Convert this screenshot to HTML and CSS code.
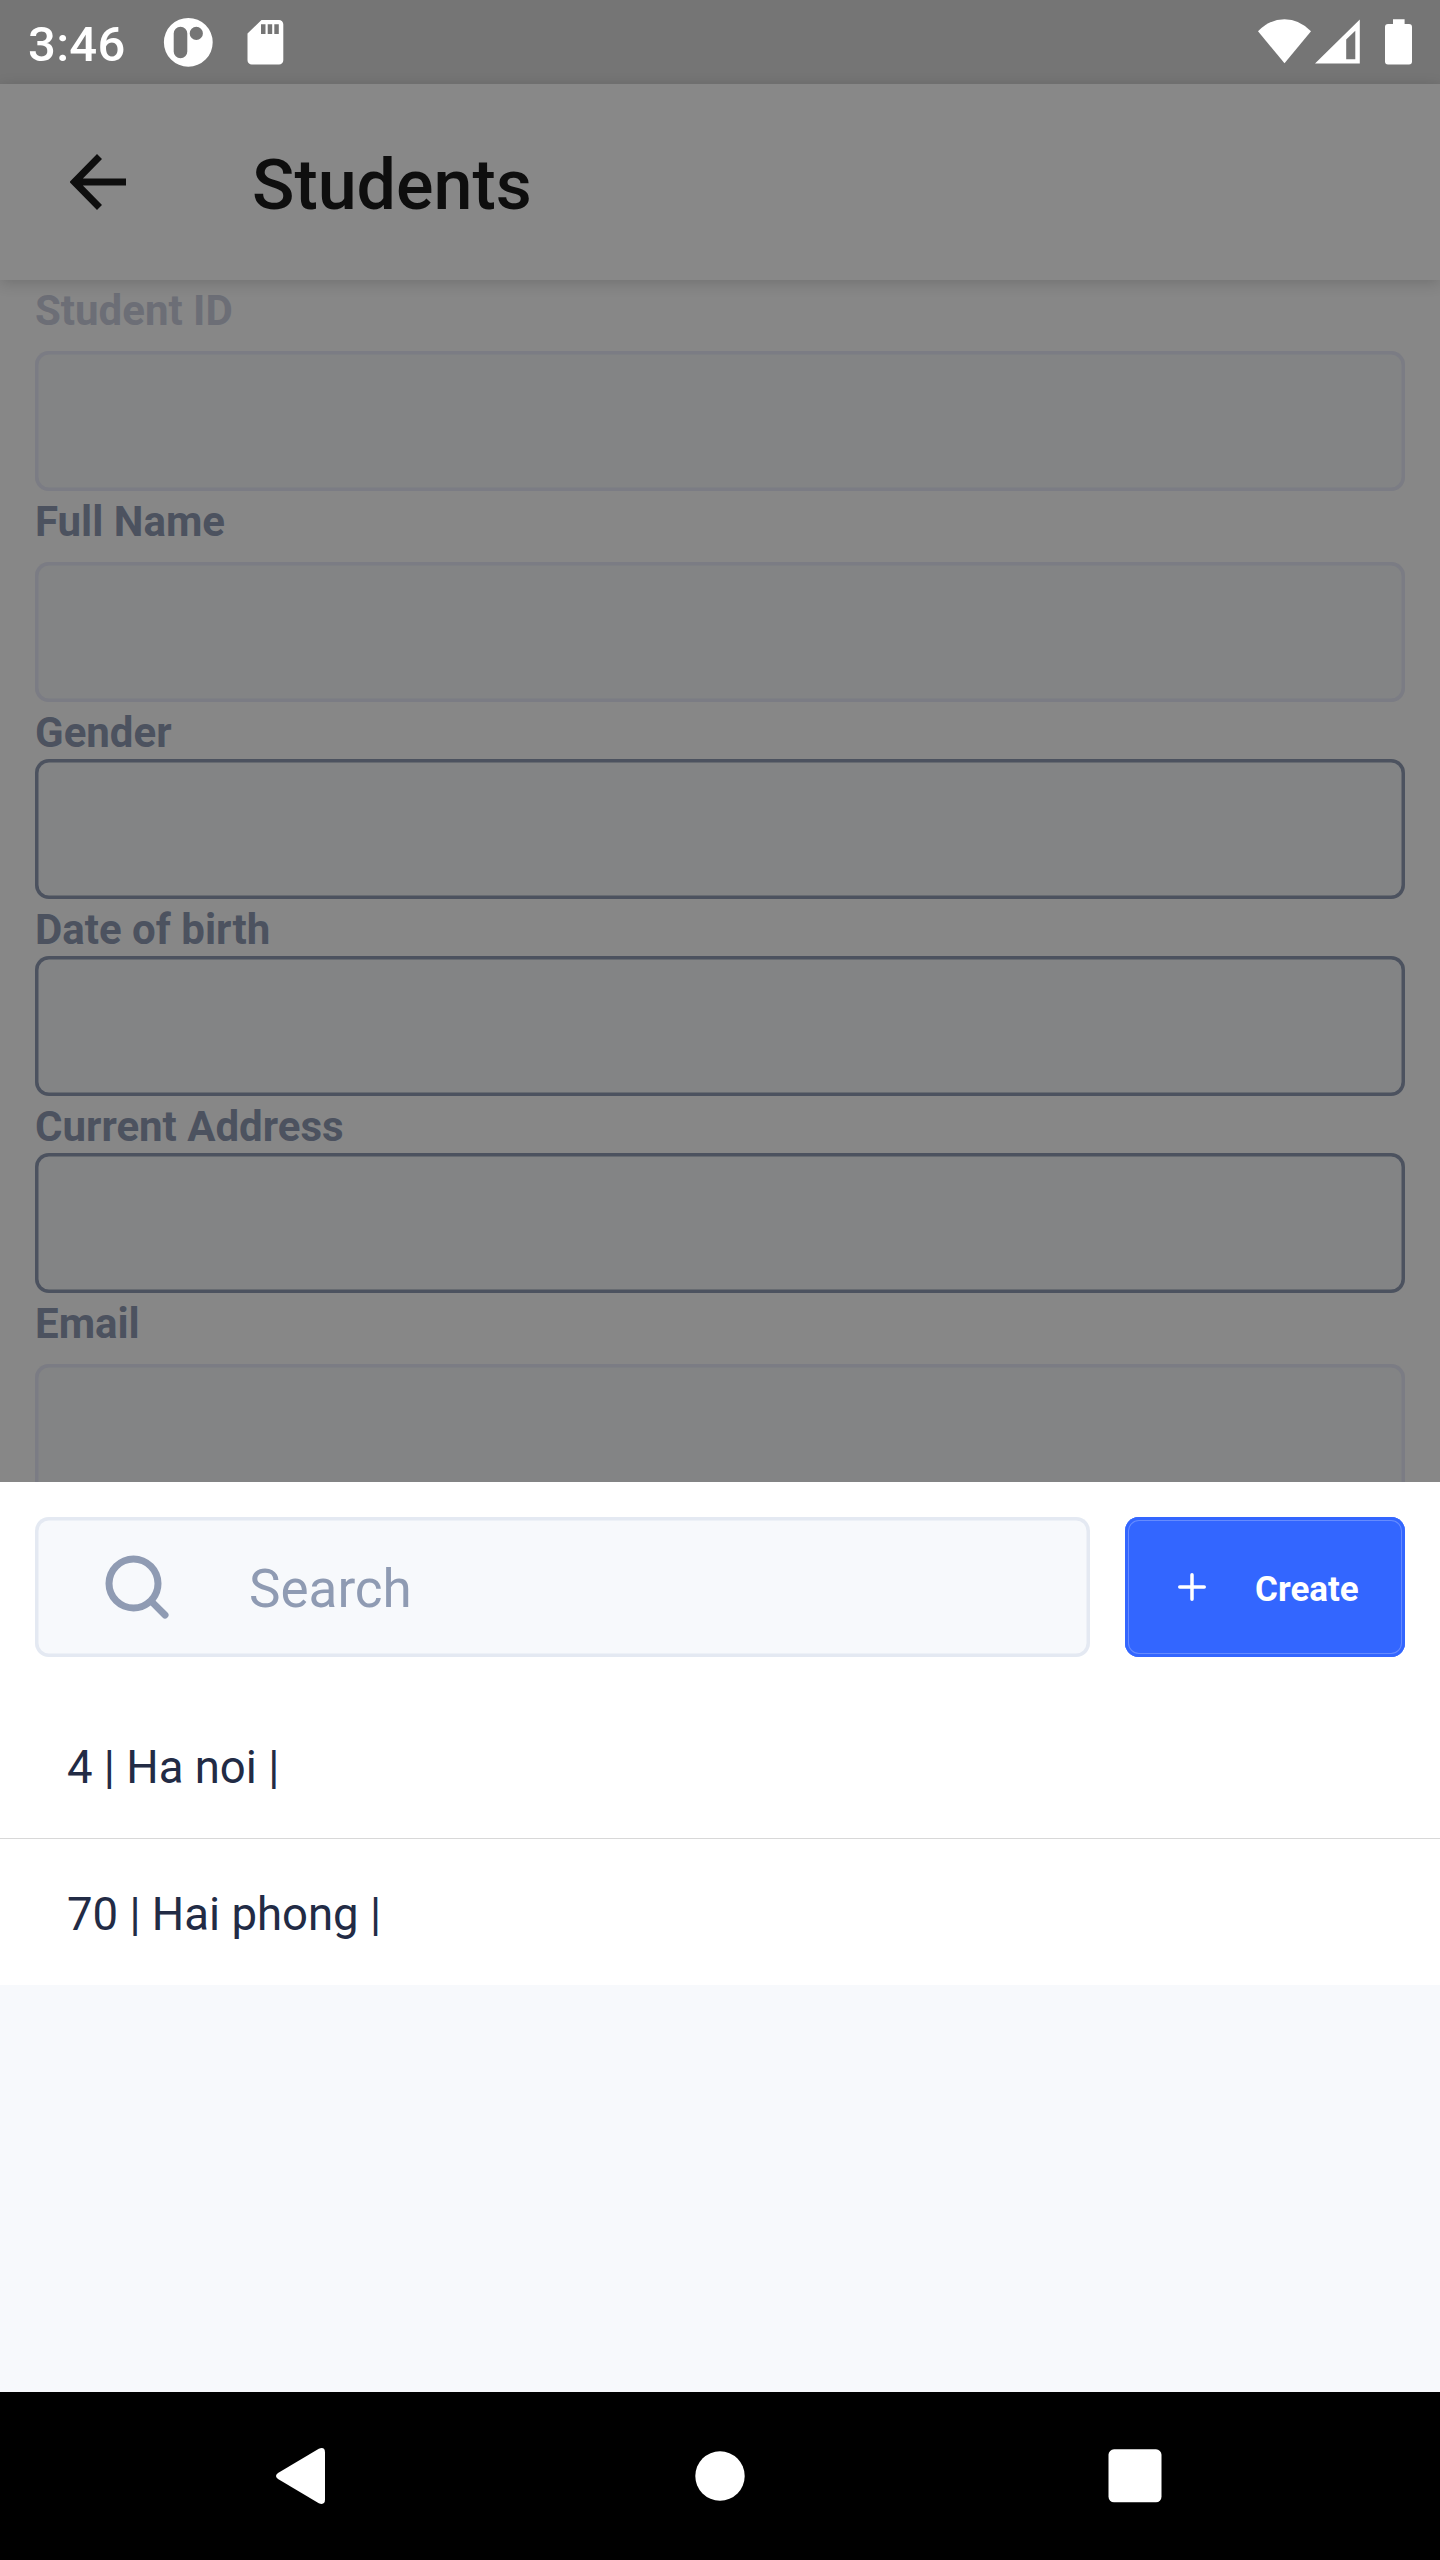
FILE: index.html
```html
<!DOCTYPE html>
<html lang="en">
<head>
<meta charset="utf-8">
<title>Students</title>
<link rel="stylesheet" href="styles.css">
</head>
<body>
<div class="screen">
  <div class="status-bar">
    <span class="clock">3:46</span>
    <svg class="notif-icons" width="132" height="84" viewBox="160 0 132 84">
      <path fill="#fff" fill-rule="evenodd" d="M188.3 17.9a24.4 24.4 0 1 0 0 48.8a24.4 24.4 0 1 0 0-48.8zM180.5 26.7a6.8 6.8 0 0 1 6.8 6.8v18a6.8 6.8 0 0 1-13.6 0v-18a6.8 6.8 0 0 1 6.8-6.8zM196.3 26.8a6.6 6.6 0 1 1 0 13.2a6.6 6.6 0 1 1 0-13.2z"/>
      <path fill="#fff" fill-rule="evenodd" d="M261.5 20H279a4.3 4.3 0 0 1 4.3 4.3V60.2a4.3 4.3 0 0 1-4.3 4.3H251.8a4.3 4.3 0 0 1-4.3-4.3V33.500zM261 24.200v9.800h4.500v-9.800zM267.700 24.200v9.800h4.500v-9.800zM274.300 24.200v9.800h4.500v-9.800z"/>
    </svg>
    <svg class="system-icons" width="160" height="84" viewBox="1256 0 160 84">
      <path fill="#fff" d="M1284.500 63.300L1258 31.300Q1269.500 19.200 1284.500 19.200T1311 31.300z"/>
      <path fill="#fff" fill-rule="evenodd" d="M1315 63.600L1359.800 19.500V63.600zM1346.200 39.500V59.200H1355.300V30.700z"/>
      <path fill="#fff" d="M1393 19.200h11.600v4.800h4.400a3 3 0 0 1 3 3v34.600a3 3 0 0 1-3 3h-21a3 3 0 0 1-3-3V27a3 3 0 0 1 3-3h5z"/>
    </svg>
  </div>

  <header class="app-bar">
    <svg class="back" width="56" height="56" viewBox="0 0 56 56">
      <path fill="none" stroke="#0e0e0e" stroke-width="7" d="M56 28H5M29.500 2.500L4.500 28L29.500 53.500"/>
    </svg>
    <h1 class="title">Students</h1>
  </header>

  <main class="form">
    <label class="label label-muted">Student ID</label>
    <div class="field spaced"></div>
    <label class="label">Full Name</label>
    <div class="field spaced"></div>
    <label class="label">Gender</label>
    <div class="field picker"></div>
    <label class="label">Date of birth</label>
    <div class="field picker"></div>
    <label class="label">Current Address</label>
    <div class="field picker"></div>
    <label class="label">Email</label>
    <div class="field spaced"></div>
  </main>

  <section class="sheet">
    <div class="toolbar">
      <div class="search">
        <svg width="84" height="84" viewBox="0 0 24 24"><path fill="#8f9bb3" d="M20.710 19.290l-3.400-3.390A7.920 7.920 0 0 0 19 11a8 8 0 1 0-8 8 7.920 7.920 0 0 0 4.900-1.690l3.390 3.400a1 1 0 0 0 1.420 0 1 1 0 0 0 0-1.420zM5 11a6 6 0 1 1 6 6 6 6 0 0 1-6-6z"/></svg>
        <span class="placeholder">Search</span>
      </div>
      <div class="create">
        <svg width="42" height="42" viewBox="0 0 24 24"><path fill="#fff" d="M19 11h-6V5a1 1 0 0 0-2 0v6H5a1 1 0 0 0 0 2h6v6a1 1 0 0 0 2 0v-6h6a1 1 0 0 0 0-2z"/></svg>
        <span>Create</span>
      </div>
    </div>
    <div class="row divided">4 | Ha noi |</div>
    <div class="row">70 | Hai phong |</div>
  </section>

  <nav class="nav-bar">
    <svg width="1440" height="168" viewBox="0 2392 1440 168">
      <path fill="#fff" d="M278 2473L318.800 2448.700Q325 2446.500 325 2452.500V2499.500Q325 2505.500 318.800 2503.300L278 2479Q274 2476 278 2473z"/>
      <circle fill="#fff" cx="720" cy="2476" r="24.700"/>
      <rect fill="#fff" x="1108.500" y="2449.300" width="53" height="53" rx="5.500"/>
    </svg>
  </nav>
</div>
</body>
</html>
```
FILE: styles.css
```css
* { box-sizing: border-box; }

body {
  margin: 0;
  font-family: Roboto, "Liberation Sans", sans-serif;
}

svg { display: block; flex: none; }

.screen {
  display: flex;
  flex-direction: column;
  width: 1440px;
  height: 2560px;
  overflow: hidden;
  background: #f7f9fc;
}

.status-bar {
  display: flex;
  flex: none;
  height: 84px;
  padding: 0 24px 0 28px;
  background: #757575;
  color: #fff;
}

.clock {
  width: 132px;
  padding-top: 4px;
  font-size: 49px;
  font-weight: 500;
  letter-spacing: 0.3px;
  line-height: 81px;
}

.system-icons { margin-left: auto; }

.app-bar {
  display: flex;
  flex: none;
  align-items: center;
  height: 196px;
  padding: 0 70px;
  background: #888;
  box-shadow: 0 3px 14px rgba(0, 0, 0, 0.16);
  z-index: 1;
}

.back { margin-bottom: 1px; }

.title {
  margin: 5px 0 0 126px;
  color: #0e0e0e;
  font-size: 70px;
  font-weight: 500;
  line-height: 84px;
}

.form {
  flex: none;
  height: 1202px;
  padding: 0 35px;
  overflow: hidden;
  background: #878787;
}

.label {
  display: block;
  height: 57px;
  padding-top: 4px;
  color: #4c525f;
  font-size: 42px;
  font-weight: 700;
  line-height: 53px;
}

.label-muted { color: #6c6e76; }

.field {
  height: 140px;
  border-radius: 14px;
  background: #838485;
  box-shadow: inset 0 0 0 3.5px #7b7c84;
}

.spaced { margin-top: 14px; }

.picker { box-shadow: inset 0 0 0 3.5px #4c525f; }

.sheet {
  display: flex;
  flex: none;
  flex-direction: column;
  background: #fff;
}

.toolbar {
  display: flex;
  gap: 35px;
  padding: 35px;
}

.search {
  display: flex;
  flex: 1;
  align-items: center;
  gap: 70px;
  height: 140px;
  padding-left: 60px;
  border-radius: 14px;
  background: #f7f9fc;
  box-shadow: inset 0 0 0 3.5px #e4e9f2;
}

.placeholder {
  padding-top: 3px;
  color: #8f9bb3;
  font-size: 53px;
  line-height: 62px;
}

.create {
  display: flex;
  align-items: center;
  gap: 42px;
  width: 280px;
  height: 140px;
  padding-left: 46px;
  border-radius: 14px;
  background: #36f;
  box-shadow: inset 0 0 0 3px #36f, inset 0 0 0 4px #658bff;
  color: #fff;
  font-size: 35px;
  font-weight: 700;
  line-height: 42px;
}

.create span { padding-top: 5px; }

.row {
  height: 146px;
  padding: 4px 67px 0;
  color: #222b45;
  font-size: 45.5px;
  line-height: 143px;
}

.divided {
  height: 147px;
  border-bottom: 1px solid #d8d8d8;
}

.nav-bar {
  height: 168px;
  margin-top: auto;
  background: #000;
}
```
